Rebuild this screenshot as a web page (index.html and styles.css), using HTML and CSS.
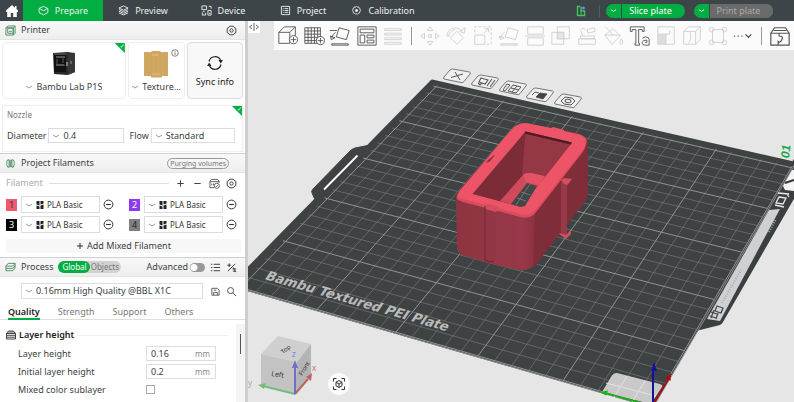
FILE: index.html
```html
<!DOCTYPE html>
<html lang="en">
<head>
<meta charset="utf-8">
<title>Bambu Studio</title>
<link rel="stylesheet" href="styles.css">
</head>
<body>
<svg class="defs" aria-hidden="true">
  <symbol id="chev" viewBox="0 0 8 8"><path d="M1 3l3 2 3-2" fill="none" stroke="currentColor"/></symbol>
  <symbol id="gear" viewBox="0 0 12 12"><path d="M4 1.3h4l.8 1.4 1.9.9v4.8l-1.9.9L8 10.700H4l-.8-1.400-1.900-.9V3.600l1.900-.9z" fill="none" stroke="currentColor" stroke-linejoin="round"/><circle cx="6" cy="6" r="1.800" fill="none" stroke="currentColor"/></symbol>
  <symbol id="minus" viewBox="0 0 10 10"><circle cx="5" cy="5" r="4" fill="none" stroke="currentColor" stroke-width=".9"/><path d="M2.800 5h4.400" stroke="currentColor"/></symbol>
  <symbol id="spool" viewBox="0 0 8 8"><path d="M.5 0h3v4.500l-3-1zM4.500 0h3v2.500l-3 1zM.5 4.500l3 1V8h-3zM4.500 4.500l3-1V8h-3z" fill="#222"/></symbol>
</svg>

<header class="topbar">
  <button class="home" aria-label="Home"><svg viewBox="0 0 14 14"><path d="M7 1L1 6.500V8h1.200v5h3.600V9h2.400v4h3.600V8H13V6.500L11.500 5V2H10v1.700z" fill="#fff"/></svg></button>
  <nav class="tabs">
    <a class="tab on" href="#prepare"><svg viewBox="0 0 12 12"><path d="M6 1.500l4.800 2.300v4.500L6 10.700 1.200 8.300V3.800zM1.200 3.800L6 6.200l4.800-2.400"/></svg>Prepare</a>
    <a class="tab" href="#preview"><svg viewBox="0 0 12 12"><path d="M6 1l5 2.300-5 2.300-5-2.300zM1 5l5 2.300L11 5M1 6.800l5 2.300 5-2.300M1 8.600l5 2.300 5-2.300"/></svg>Preview</a>
    <a class="tab" href="#device"><svg viewBox="0 0 12 12"><path d="M1 1h5v4H1zM2 7h2M8.500 1.500H11V4M7.500 6H11v5H7.500zM1.500 8v3H5V8.500M8.500 9h1.500"/></svg>Device</a>
    <a class="tab" href="#project"><svg viewBox="0 0 12 12"><path d="M1.500 1.500h9v9h-9zM5 4h4M5 6h4M5 8h4M3 4h1M3 6h1M3 8h1"/></svg>Project</a>
    <a class="tab" href="#calibration"><svg viewBox="0 0 12 12"><path d="M6 1.500l1 .7 1.300-.1.500 1.200 1.200.7-.2 1.300.6 1-.9 1-.1 1.300-1.300.4L7.200 10 6 9.700l-1.200.3-.9-1-1.300-.4-.1-1.300-.9-1 .6-1L2 4l1.200-.7.5-1.200L5 2.200z"/><circle cx="6" cy="6" r="1.200" fill="#fff"/></svg>Calibration</a>
  </nav>
  <div class="actions">
    <svg class="status" viewBox="0 0 10 12"><path d="M4 1.500H1.500v9h7V6H5V1.500" fill="none" stroke="#3fc463" stroke-width="1.400"/><path d="M5 6v4" stroke="#3fc463"/><circle cx="7.500" cy="3" r="1.500" fill="#8a7cf0"/></svg>
    <i class="vline"></i>
    <div class="pill"><button aria-label="Slice options"><svg viewBox="0 0 8 8"><use href="#chev"/></svg></button><button class="main">Slice plate</button></div>
    <div class="pill off"><button aria-label="Print options"><svg viewBox="0 0 8 8"><use href="#chev"/></svg></button><button class="main">Print plate</button></div>
  </div>
</header>

<main class="work">
<aside class="side">
  <div class="bar first">
    <svg class="ic green" viewBox="0 0 12 12"><path d="M3.500 1h7.500v8l-2 2H1V3zM3 3.500h6V9H3zM4.500 7h3M1 3h8l2-2M9 3v8"/></svg>
    <h2>Printer</h2>
    <button class="icon end" aria-label="Printer settings"><svg viewBox="0 0 12 12"><use href="#gear"/></svg></button>
  </div>

  <section class="cards">
    <div class="card wide ticked">
      <svg class="pic" viewBox="0 0 28 26"><path d="M3 2l14-1 8 1v19l-8 3-13-1z" fill="#2a2a2b"/><path d="M4 4h12v17H4z" fill="#111"/><path d="M6 5h9v2H6zM6 13h8l1 2H6z" fill="#555"/><path d="M4 3h13M7 8v5M13 7v5" stroke="#777" stroke-width=".7"/><path d="M18 3l7-1v19l-7 3z" fill="#363637"/><path d="M20 10h2v3h-2z" fill="#666"/><path d="M17 11v4" stroke="#ccc"/></svg>
      <label class="pick"><svg viewBox="0 0 8 8"><use href="#chev"/></svg><select aria-label="Printer model"><option>Bambu Lab P1S</option></select></label>
    </div>
    <div class="card mid">
      <svg class="pic" viewBox="0 0 28 28"><path d="M2 2h7l1-1h8l1 1h7v24h-6v1.500H9V26H2z" fill="#cfa761"/><path d="M5 4v20M9 4v20M14 3v21M18 4v20M23 4v20" stroke="#c8a05b" stroke-width=".5"/><path d="M10 5h7M10 24h8" stroke="#e0c083"/></svg>
      <svg class="info" viewBox="0 0 8 8"><circle cx="4" cy="4" r="3.300" fill="none" stroke="#555" stroke-width=".7"/><path d="M4 3.500V6M4 2v.8" stroke="#555" stroke-width=".8"/></svg>
      <label class="pick"><svg viewBox="0 0 8 8"><use href="#chev"/></svg><select aria-label="Plate type"><option>Texture...</option></select></label>
    </div>
    <button class="card sync"><svg viewBox="0 0 18 18"><path d="M3 7.500A6.200 6.200 0 0 1 14.500 6M15 10.500A6.200 6.200 0 0 1 3.500 12" fill="none" stroke="#222" stroke-width="1.200"/><path d="M17 6l-2.200 3.500L12.500 6zM1 12l2.200-3.500L5.500 12z" fill="#222"/></svg>Sync info</button>
  </section>

  <section class="nozzle ticked">
    <p>Nozzle</p>
    <div class="line">
      <label for="dia">Diameter</label>
      <span class="box"><svg viewBox="0 0 8 8"><use href="#chev"/></svg><select id="dia"><option>0.4</option></select></span>
      <label class="flow" for="flow">Flow</label>
      <span class="box"><svg viewBox="0 0 8 8"><use href="#chev"/></svg><select id="flow"><option>Standard</option></select></span>
    </div>
  </section>

  <div class="bar">
    <svg class="ic green" viewBox="0 0 12 12"><path d="M3 2C1.500 3 1.500 9 3 10h1.500V2zM9 2c1.500 1 1.500 7 0 8H7.500V2zM5.500 2v8M6.500 2v8"/></svg>
    <h2>Project Filaments</h2>
    <button class="purge">Purging volumes</button>
  </div>

  <section class="filaments">
    <div class="fhead">
      <span>Filament</span><i></i>
      <button class="icon" aria-label="Add filament"><svg viewBox="0 0 12 12"><path d="M6 2.500v7M2.500 6h7" stroke="#333"/></svg></button>
      <button class="icon" aria-label="Remove filament"><svg viewBox="0 0 12 12"><path d="M2.500 6h7" stroke="#333"/></svg></button>
      <button class="icon" aria-label="Sync filaments"><svg viewBox="0 0 12 12"><path d="M6 10.500H1V4h10v1.500M1 4l1.500-2.500h7L11 4M3 6v2M5 6v2" fill="none" stroke="#555"/><circle cx="8.500" cy="8.500" r="2.800" fill="#fff" stroke="#555"/><path d="M7.300 8.500l1 1 1.500-1.700" fill="none" stroke="#555" stroke-width=".8"/></svg></button>
      <button class="icon" aria-label="Filament settings"><svg viewBox="0 0 12 12"><use href="#gear"/></svg></button>
    </div>
    <div class="slots">
      <div class="slot"><b class="sw red">1</b><span class="box"><svg viewBox="0 0 8 8"><use href="#chev"/></svg><svg viewBox="0 0 8 8"><use href="#spool"/></svg><select aria-label="Filament 1"><option>PLA Basic</option></select></span><button class="icon" aria-label="Remove 1"><svg viewBox="0 0 10 10"><use href="#minus"/></svg></button></div>
      <div class="slot"><b class="sw violet">2</b><span class="box"><svg viewBox="0 0 8 8"><use href="#chev"/></svg><svg viewBox="0 0 8 8"><use href="#spool"/></svg><select aria-label="Filament 2"><option>PLA Basic</option></select></span><button class="icon" aria-label="Remove 2"><svg viewBox="0 0 10 10"><use href="#minus"/></svg></button></div>
      <div class="slot"><b class="sw black">3</b><span class="box"><svg viewBox="0 0 8 8"><use href="#chev"/></svg><svg viewBox="0 0 8 8"><use href="#spool"/></svg><select aria-label="Filament 3"><option>PLA Basic</option></select></span><button class="icon" aria-label="Remove 3"><svg viewBox="0 0 10 10"><use href="#minus"/></svg></button></div>
      <div class="slot"><b class="sw grey">4</b><span class="box"><svg viewBox="0 0 8 8"><use href="#chev"/></svg><svg viewBox="0 0 8 8"><use href="#spool"/></svg><select aria-label="Filament 4"><option>PLA Basic</option></select></span><button class="icon" aria-label="Remove 4"><svg viewBox="0 0 10 10"><use href="#minus"/></svg></button></div>
    </div>
    <button class="mixed"><svg viewBox="0 0 8 8"><path d="M4 1v6M1 4h6" stroke="#333"/></svg>Add Mixed Filament</button>
  </section>

  <div class="bar">
    <svg class="ic green" viewBox="0 0 12 12"><path d="M3.500 1.500H11l-2.500 3H1zM1 7h7.500L11 4M1 9.500h7.500L11 6.500M1 4.500v5M11 1.500v5"/></svg>
    <h2>Process</h2>
    <div class="seg"><button class="on">Global</button><button>Objects</button></div>
    <label class="adv" for="adv">Advanced</label>
    <input class="switch" type="checkbox" id="adv">
    <button class="icon" aria-label="Parameter list"><svg viewBox="0 0 12 12"><path d="M4 2.500h7M4 6h7M4 9.500h7M1 2.500h1.500M1 6h1.500M1 9.500h1.500" stroke="#333"/></svg></button>
    <button class="icon" aria-label="Compare presets"><svg viewBox="0 0 12 12"><path d="M2 10L10 2M1.500 3.500h4M3.500 1.500v4M7 7.500h4M7.500 10H11M8 6l2.500 5" fill="none" stroke="#333"/></svg></button>
  </div>

  <section class="preset">
    <span class="box"><svg viewBox="0 0 8 8"><use href="#chev"/></svg><select aria-label="Process preset"><option>0.16mm High Quality @BBL X1C</option></select></span>
    <button class="icon" aria-label="Save preset"><svg viewBox="0 0 12 12"><path d="M2 2.500h6l2 2V10H2zM4 10V7h4v3M4 4.500h3" fill="none" stroke="#444" stroke-width=".9"/></svg></button>
    <button class="icon" aria-label="Search"><svg viewBox="0 0 12 12"><circle cx="5" cy="5" r="3.300" fill="none" stroke="#444"/><path d="M7.500 7.500L11 11" stroke="#444"/></svg></button>
  </section>

  <nav class="subtabs"><a class="on" href="#quality">Quality</a><a href="#strength">Strength</a><a href="#support">Support</a><a href="#others">Others</a></nav>

  <section class="params">
    <div class="plist">
      <h3><svg viewBox="0 0 10 10"><path d="M.5 3.500L2.500 1h5l2 2.500z" fill="#aaa" stroke="#444"/><path d="M.5 3.500h9v5.500h-9zM.5 5.300h9M.5 7.200h9" fill="none" stroke="#444"/></svg>Layer height<i></i></h3>
      <div class="param"><label for="lh">Layer height</label><span class="num"><input id="lh" value="0.16"><em>mm</em></span></div>
      <div class="param"><label for="ilh">Initial layer height</label><span class="num"><input id="ilh" value="0.2"><em>mm</em></span></div>
      <div class="param"><label for="mix">Mixed color sublayer</label><input class="tick" type="checkbox" id="mix"></div>
    </div>
    <div class="track"><i></i></div>
  </section>
</aside>

<section class="view">
  <svg class="scene" viewBox="248 21 546 381" preserveAspectRatio="xMinYMin slice" role="img" aria-label="Build plate">
    <defs>
      <g id="tag"><path d="M-13 3q-1-1 0-2l6-7q1-1 3-1L12.500-4q1.500.5.500 2L7 5.500Q6 7 4 6.500z" fill="#efefef" stroke="#777" stroke-width="1"/></g>
      <linearGradient id="front" x1="0" x2="1"><stop offset="0" stop-color="#8d3440"/><stop offset=".5" stop-color="#98384a"/><stop offset=".62" stop-color="#8a313e"/><stop offset="1" stop-color="#84303b"/></linearGradient>
    </defs>
    <path d="M385 129l-15 16-15 3q-3 1-5 3l-37 38q-2 2-1 4l4 9z" fill="#3f4243" stroke="#3f4243"/>
    <path d="M696 331l24-6q2-1 3-3l72-125v-40z" fill="#3c3f40"/>
    <g id="plate"></g>
    <path d="M357.500 155.500L324 189.500" stroke="#fff" stroke-width="1.800"/>
    <path d="M707 319L769 210l11-1-60 112z" fill="#cdd1d3"/>
    <path d="M783 186l9-16h2v21l-9-1z" fill="#f4f4f4"/><path d="M785 183l9-3" stroke="#333" stroke-width="2"/>
    <g fill="none" stroke="#e8e8e8" stroke-width="1.300"><path d="M779 197l7 1-3 6-7-1zM778 193l11 1M775 205l9 2M787 194l2 3"/></g>
    <g fill="none" stroke="#444" stroke-width="1.200"><path d="M717 306l6 2-2 5-6-2zM711 312l6 2M710 316l6 2M714 310l-3 8M718 313l-2 6"/></g>
    <path d="M722 303L741 270M769 232l7-13" stroke="#aaaeb0" stroke-width="2" stroke-dasharray="1 1.500"/>
    <text class="platename" transform="translate(264 279) rotate(16) skewX(-18)">Bambu Textured PEI Plate</text>
    <text class="plateno" transform="translate(789 159) rotate(-84) skewX(-10)">01</text>

    <path d="M602 392l9-15q2-4 6-4l43 11q3 1 2 3l-11 17z" fill="#c9c9c9"/>
    <path d="M606 383l50 13M627 376l-14 23M645 381l-13 21" stroke="#e3e3e3" fill="none"/>
    <path d="M652 406L606 393" stroke="#13b413" stroke-width="1.800"/><path d="M600 392l8-1.500-2 5z" fill="#13b413"/>
    <path d="M652 406l17-28" stroke="#a80d0d" stroke-width="2"/><path d="M671 373l-.5 8-4.500-3z" fill="#a80d0d"/>
    <path d="M653 406v-36" stroke="#1212a0" stroke-width="2"/><path d="M654 362l3 9h-6z" fill="#1212a0"/>

    <g fill="none" stroke="#555">
      <g transform="translate(457 76)"><use href="#tag"/><path d="M-6 1.500L6-2M-2-4L3 4"/></g>
      <g transform="translate(485 82)"><use href="#tag"/><path d="M-4-4l7 2-3 4-6-2zM-7 1l2 2 2-2M7-3L2 4M10-2L5 5" stroke-width="1.100"/></g>
      <g transform="translate(513 88)"><use href="#tag"/><path d="M-6-4l3 1-5 6-2-1zM0-3l8 2-5 6-8-2zM4-2l-5 6M-2 0l8 2"/></g>
      <g transform="translate(540 95)"><use href="#tag"/><path d="M0-2l7 1-4 5-7-2z" fill="#444"/><path d="M-1-2l-4-1-3 3"/></g>
      <g transform="translate(568 101)"><use href="#tag"/><path d="M-7 0l4-4 7 1 3 3-4 4-7-1z"/><ellipse rx="3" ry="1.700" transform="rotate(8)"/></g>
    </g>

    <path d="M456 197Q457 192 462 187L511 130q6-7 15-7l52 10q10 3 10 12v46q0 7-5 13l-40 51q-9 15-20 15-12 0-61-15-5-2-5-8z" fill="url(#front)"/>
    <path d="M535 212L585 148q3-4 2-9 1 3 1 6v47q0 6-5 12l-40 51q-4 8-10 13z" fill="#7f2d38"/>
    <path d="M457 197q1-5 6-10L511 130q6-7 15-7l25 5 2-1 11 3v1l14 3q11 3 8 10-1 4-4 8L537 210q-6 9-17 6l-57-15q-7-2-6-4z" fill="#ee5468"/>
    <path d="M457 197l6 2 57 15q11 3 17-6L586 146q-1 3-4 7L537 211q-6 9-17 6l-57-15q-7-2-6-5z" fill="#d94c5f"/>
    <path d="M525.500 131.500L572 142.500 521 207 472.500 194z" fill="#7b2c37"/>
    <path d="M525.500 131.500L572 142.500 544 178 522 175z" fill="#953744"/>
    <path d="M525.500 131.500L572 142.500l-1.500 2-46-11z" fill="#4b1d24"/>
    <path d="M522 176q4-3 8-2l15 3L521 207l-21-6z" fill="#cf4a5b"/><path d="M523 175q4-3 8-2l14 3-6 9-13-3z" fill="#e45265"/>
    <path d="M527 183l10 3-12 20-4 1-10-3z" fill="#434646"/><path d="M521 192l9 3M517 198l9 3M530 184l-14 21" stroke="#888" stroke-width=".7"/>
    <path d="M488 160l7-5-5 6-3 2z" fill="#7b2c37"/><path d="M486 162l8-7" stroke="#b74152"/>
    <path d="M485 203l14 4-3 5-11-3z" fill="#d64d60"/><path d="M485 206v54l5 2 4-1" fill="none" stroke="#6d2731"/>
    <path d="M561 180l10-2-1 5-3 3v50l-6-2z" fill="#98394a"/><path d="M561 180l3-2 8 1-5 6-3-1z" fill="#d64d60"/><path d="M560 233l6 2 5-5v4l-5 5-7-5z" fill="#d64d60"/>

    <g>
      <path d="M278 336l33 8-14 18-36-8z" fill="#cfcfcf"/><path d="M261 354l36 8-2 32-34-9z" fill="#c3c3c3"/><path d="M311 344l-14 18-2 32 16-20z" fill="#b4b4b4"/>
      <g class="cubetext"><text transform="translate(271 376) rotate(8)">Left</text><text class="small" transform="translate(283 354) rotate(-38)">Top</text><text class="small" transform="translate(302 376) rotate(-58)">Front</text></g>
      <path d="M295 394L263 386" stroke="#74bd7b" stroke-width="2"/><path d="M258 385l8-2-2 6z" fill="#74bd7b"/>
      <path d="M295 394l13-15" stroke="#b9655f" stroke-width="2"/><path d="M312 373l-1 8-5-4z" fill="#b9655f"/>
      <path d="M295 394v-26" stroke="#7070c8" stroke-width="2"/><path d="M295 360l3 8h-6z" fill="#7070c8"/>
      <g class="axes"><text x="248" y="386" fill="#7cc284">y</text><text x="312" y="371" fill="#cf6f6f">x</text><text x="292" y="357" fill="#7c7cd4">z</text></g>
    </g>
  </svg>

  <button class="fold" aria-label="Collapse sidebar"><svg viewBox="0 0 12 10"><path d="M6 1v8M4 3L1.500 5 4 7M8 3l2.500 2L8 7" fill="none" stroke="#555" stroke-width=".9"/></svg></button>
  <button class="focus" aria-label="Fit view"><svg viewBox="0 0 14 14"><path d="M1.500 4.500v-3h3M9.500 1.500h3v3M12.500 9.500v3h-3M4.500 12.500h-3v-3M7 3.500l3 1.700v3.600l-3 1.700-3-1.700V5.200zM4 5.200L7 7l3-1.800M7 7v3.500" fill="none" stroke="#333"/></svg></button>

  <div class="tools">
    <button aria-label="Add model"><svg viewBox="0 0 24 24"><path d="M2 8h12v12H2zM2 8l6-6h12v10M14 8l6-6"/><circle cx="18" cy="16" r="4.500" fill="#fff"/><path d="M18 13v6M15 16h6"/></svg></button>
    <button aria-label="Add plate"><svg viewBox="0 0 24 24"><path d="M2 3h17v17H2zM5.500 3v17M9 3v17M12.500 3v17M16 3v17M2 6.500h17M2 10h17M2 13.500h17M2 17h17"/><circle cx="19" cy="17" r="4.500" fill="#fff"/><path d="M19 14v6M16 17h6"/></svg></button>
    <button aria-label="Auto orient"><svg viewBox="0 0 24 24"><path d="M11 3l11 3-3 10-11-3zM3 20.500h18v1.500H3zM1 6h8M7 8q-3 2-4 6M1.500 12l1 4 4-2z"/></svg></button>
    <button aria-label="Arrange"><svg viewBox="0 0 24 24"><path d="M2 2h20v20H2zM4.500 4.500h15v4h-15zM4.500 11h5v8.500h-5zM12 11h7.500v3H12zM12 16.500h7.500v3H12z"/></svg></button>
    <button class="dim" aria-label="Layers"><svg viewBox="0 0 24 24"><path d="M3 4h18v2H3zM3 9h18v2H3zM3 14h18v2H3zM3 19h18v2H3z"/></svg></button>
    <i></i>
    <button class="dim" aria-label="Move"><svg viewBox="0 0 24 24"><path d="M12 2l3 4h-6zM12 22l3-4h-6zM2 12l4-3v6zM22 12l-4-3v6zM10.500 10.500h3v3h-3z"/></svg></button>
    <button class="dim" aria-label="Rotate"><svg viewBox="0 0 24 24"><path d="M13 7l7 7-7 7-7-7zM2 13q0-9 9-10 5 0 8 4M22 3l-1 6-5-2zM4 13q0-7 7-8"/></svg></button>
    <button class="dim" aria-label="Scale"><svg viewBox="0 0 24 24"><path d="M3 11h11v10H3zM13 9l5-5v4M14 4h4"/><path d="M3 8V2h18v19h-5" stroke-dasharray="3 2"/></svg></button>
    <button class="dim" aria-label="Lay on face"><svg viewBox="0 0 24 24"><path d="M11 3l11 3-3 10-11-3zM3 20.500h18v1.500H3zM7 8q-3 2-4 6M1.500 12l1 4 4-2z"/></svg></button>
    <button class="dim" aria-label="Cut"><svg viewBox="0 0 24 24"><path d="M4 2h17v8H4zM4 14h17v8H4zM1 12h22"/></svg></button>
    <button class="dim" aria-label="Boolean"><svg viewBox="0 0 24 24"><path d="M2 8h13v13H2zM8 2h13v13H8z"/><path d="M8 8h7v7H8z" fill="#e6e6e6"/></svg></button>
    <button class="dim" aria-label="Supports"><svg viewBox="0 0 24 24"><path d="M5 12h15v3H5zM3 15h18v6H3zM8 12l-3-6 3-3 3 3M12 5l8-2 1 4-8 2z"/></svg></button>
    <button class="dim" aria-label="Color paint"><svg viewBox="0 0 24 24"><path d="M3 11l9-7 8 8-9 9zM3 11h17M4 2l8 9M21 15q3 5 0 6-3-1 0-6z"/></svg></button>
    <button aria-label="Text"><svg viewBox="0 0 24 24"><path d="M1.500 2h15v5h-2V5H10.500v15h1V22h-5v-2h1V5H3.500v2h-2zM15 15q0-2 3-2 4 0 4 3v6h-4q-4 0-3.500-3t5-2.500V19h-2"/></svg></button>
    <button class="dim" aria-label="Assembly parts"><svg viewBox="0 0 24 24"><path d="M3 2h18v19h-9"/><path d="M3 10h9v11H3z" fill="#ddd"/><path d="M3 2v8M12 10h4V6"/></svg></button>
    <button class="dim" aria-label="Seam"><svg viewBox="0 0 24 24"><path d="M3 7h13v14H3zM3 7l5-5h13v14l-5 5M16 7l5-5M10 8q2 8-2 12"/></svg></button>
    <button class="dim" aria-label="Brim ears"><svg viewBox="0 0 24 24"><path d="M6 5h12v14H6z"/><circle cx="5" cy="5" r="2.500"/><circle cx="19" cy="5" r="2.500"/><circle cx="5" cy="19" r="2.500"/><circle cx="19" cy="19" r="2.500"/></svg></button>
    <button class="more" aria-label="More tools"><svg viewBox="0 0 24 24"><path d="M1 12h1.500M5.500 12H7M10 12h1.500M15 10l3.500 3.500L22 10" stroke-width="1.500"/></svg></button>
    <i></i>
    <button aria-label="Assembly view"><svg viewBox="0 0 24 24"><path d="M2 9h20v13H2zM2 9l4-6h12l4 6M5 6h14M11 9v3q5 0 3 4t-4 2v4" stroke-width="1.300"/></svg></button>
  </div>
</section>
</main>
<script src="plate.js"></script>
</body>
</html>
```

FILE: plate.js
```js
// Draws the build plate: a 256 mm square seen in perspective, ruled every 10 mm.
(function () {
  var size = 256;
  var o = [652, 406], px = [794, 163], pxy = [432, 81], py = [232, 285];
  var dx1 = px[0] - pxy[0], dx2 = py[0] - pxy[0], sx = o[0] - px[0] + pxy[0] - py[0];
  var dy1 = px[1] - pxy[1], dy2 = py[1] - pxy[1], sy = o[1] - px[1] + pxy[1] - py[1];
  var det = dx1 * dy2 - dx2 * dy1;
  var g = (sx * dy2 - dx2 * sy) / det, h = (dx1 * sy - sx * dy1) / det;

  function at(x, y) {
    var u = x / size, v = y / size, w = g * u + h * v + 1;
    var X = ((px[0] - o[0] + g * px[0]) * u + (py[0] - o[0] + h * py[0]) * v + o[0]) / w;
    var Y = ((px[1] - o[1] + g * px[1]) * u + (py[1] - o[1] + h * py[1]) * v + o[1]) / w;
    return X.toFixed(1) + ' ' + Y.toFixed(1);
  }
  function add(d, cls) {
    var p = document.createElementNS('http://www.w3.org/2000/svg', 'path');
    p.setAttribute('d', d);
    p.setAttribute('class', cls);
    document.getElementById('plate').appendChild(p);
  }

  add('M' + at(0, 0) + 'L' + at(size, 0) + 'L' + at(size, size) + 'L' + at(0, size) + 'Z', 'sheet');
  add('M' + at(-1, 0) + 'L' + at(-1, size), 'rim');
  add('M' + at(0, -1) + 'L' + at(size, -1), 'rim');
  var thin = '', bold = '';
  for (var i = 0; i <= 250; i += 10) {
    var d = 'M' + at(i, 0) + 'L' + at(i, size - 4) + 'M' + at(0, i) + 'L' + at(size - 4, i);
    if (i % 50) thin += d; else bold += d;
  }
  add(thin, 'thin');
  add(bold, 'bold');
})();
```

FILE: styles.css
```css
* { box-sizing: border-box; margin: 0; padding: 0; }
html, body { height: 100%; }
body { display: flex; flex-direction: column; overflow: hidden; font: 9px/12px "Noto Sans", "Open Sans", sans-serif; color: #3a3f42; background: #e6e6e6; }
button, select, input { font: inherit; color: inherit; border: 0; background: none; outline: 0; }
select { appearance: none; min-width: 0; flex: 1; }
a { color: inherit; text-decoration: none; }
svg { display: block; flex: none; }
.defs { position: absolute; width: 0; height: 0; }

.topbar { display: flex; flex: none; height: 21px; background: #3d4549; color: #eee; }
.home { width: 23px; display: flex; align-items: center; justify-content: center; }
.home svg { width: 14px; height: 14px; }
.tabs { display: flex; }
.tab { display: flex; align-items: center; justify-content: center; gap: 6px; width: 80px; }
.tab svg { width: 11px; height: 11px; fill: none; stroke: currentColor; stroke-width: 1; }
.tab.on { background: #00ae42; }
.actions { display: flex; align-items: center; margin-left: auto; margin-right: 21px; }
.status { width: 10px; height: 12px; }
.vline { width: 1px; height: 12px; background: #555d61; margin: 0 6px 0 13px; }
.pill { display: flex; height: 14px; width: 79px; border-radius: 7px; overflow: hidden; background: #00ae42; color: #fff; }
.pill + .pill { margin-left: 9px; }
.pill button { width: 15px; display: flex; align-items: center; justify-content: center; }
.pill svg { width: 7px; height: 7px; }
.pill .main { flex: 1; border-left: 1px solid #3d4549; padding-right: 6px; }
.pill.off .main { background: #6b6b6b; color: #a9a9a9; }

.work { display: flex; flex: 1; min-height: 0; }
.side { width: 248px; flex: none; display: flex; flex-direction: column; background: #fff; border-right: 3px solid #cecece; overflow: hidden; }
.bar { display: flex; align-items: center; flex: none; height: 20px; padding: 0 8px 0 5px; background: linear-gradient(#f8f8f8, #eee); border-top: 1px solid #cfcfcf; border-bottom: 1px solid #e4e4e4; }
.bar.first { height: 19px; border-top: 0; }
.bar h2 { font-size: 9px; font-weight: 400; margin-left: 5px; }
.ic { width: 11px; height: 11px; fill: none; stroke: #4f8a63; stroke-width: 1; }
.end { margin-left: auto; }
.icon { display: flex; flex: none; }
.icon svg { width: 11px; height: 11px; }

.cards { display: flex; gap: 2px; padding: 2px 2px 6px; }
.card { position: relative; display: flex; flex-direction: column; align-items: center; height: 57px; border: 1px solid #eee; border-radius: 4px; background: #fff; }
.wide { flex: 126; }
.mid { flex: 57; }
.sync { flex: 56; justify-content: center; gap: 4px; background: #f8f8f8; border-color: #ddd; color: #222; }
.sync svg { width: 18px; height: 18px; }
.pic { width: 28px; height: 28px; margin-top: 7px; }
.pick { display: flex; align-items: center; gap: 3px; margin-top: 3px; color: #3a3f42; }
.pick svg, .box svg { width: 8px; height: 8px; color: #999; }
.info { position: absolute; top: 6px; right: 5px; width: 8px; height: 8px; }
.ticked { position: relative; }
.ticked::after { content: "✓"; position: absolute; top: 0; right: 0; width: 10px; height: 10px; background: #00ae42; clip-path: polygon(0 0, 100% 0, 100% 100%); color: #fff; font: 6px/6px "DejaVu Sans", sans-serif; text-align: right; }

.nozzle { margin: 0 2px 1px; height: 47px; border: 1px solid #eee; padding: 3px 7px 0 4px; }
.nozzle p { font-size: 8px; color: #777; }
.line { display: flex; align-items: center; margin-top: 7px; }
.line .box { height: 15px; margin-left: 2px; }
.line .box:nth-of-type(1) { flex: 78; }
.line .box:nth-of-type(2) { flex: 87; }
.flow { margin-left: 5px; }
.box { display: flex; align-items: center; gap: 3px; min-width: 0; padding-left: 3px; border: 1px solid #dcdcdc; background: #fff; }

.purge { margin-left: auto; margin-right: 8px; height: 11px; padding: 0 3px; border: 1px solid #999; border-radius: 6px; font-size: 6px; line-height: 9px; color: #777; }
.purge { font-size: 7px; padding: 0 2px; }
.filaments { padding: 3px 4px 4px 6px; }
.fhead { display: flex; align-items: center; gap: 6px; height: 14px; padding-right: 4px; color: #aaa; }
.fhead i { flex: 1; height: 1px; background: #ddd; }
.fhead .icon { color: #333; }
.slots { display: grid; grid-template-columns: 1fr 1fr; gap: 3px 15px; margin-top: 6px; padding-right: 4px; }
.slot { display: flex; align-items: center; height: 17px; color: #333; }
.slot .box { flex: 1; height: 17px; margin: 0 3px 0 4px; font-size: 8px; }
.slot .icon svg { width: 11px; height: 11px; }
.sw { width: 11px; height: 12px; font-weight: 400; text-align: center; line-height: 12px; }
.red { background: #f05a6e; color: #333; }
.violet { background: #8e3bf0; color: #fff; }
.black { background: #000; color: #fff; }
.grey { background: #808080; color: #222; }
.mixed { display: flex; align-items: center; justify-content: center; gap: 3px; width: 100%; height: 14px; margin-top: 6px; background: #f7f7f7; }
.mixed svg { width: 8px; height: 8px; }

.seg { display: flex; margin-left: 5px; height: 12px; border-radius: 6px; background: #d2d2d2; font-size: 8px; line-height: 12px; color: #777; }
.seg button { padding: 0 2px 0 1px; }
.seg .on { padding: 0 3px 0 4px; border-radius: 6px; background: #00ae42; color: #fff; }
.adv { margin-left: auto; }
.switch { appearance: none; width: 15px; height: 9px; margin-left: 2px; border-radius: 5px; background: radial-gradient(circle at 4px 50%, #fff 3px, #999 4px); }
.bar .switch ~ .icon { margin-left: 5px; }

.preset { display: flex; align-items: center; gap: 5px; padding: 6px 8px 0 21px; color: #3a3f42; }
.preset .box { flex: 1; height: 16px; margin-right: 2px; }
.subtabs { display: flex; gap: 18px; height: 21px; padding: 0 8px; border-bottom: 1px solid #ddd; color: #777; line-height: 26px; }
.subtabs a { height: 21px; }
.subtabs .on { color: #222; font-weight: 600; border-bottom: 2px solid #00ae42; }

.params { display: flex; flex: 1; }
.plist { flex: 1; padding: 8px 8px 0 6px; }
.plist h3 { display: flex; align-items: center; gap: 3px; height: 14px; font-size: 9px; font-weight: 600; color: #222; }
.plist h3 svg { width: 10px; height: 10px; }
.plist h3 i { flex: 1; height: 1px; background: #eee; }
.param { display: flex; align-items: center; height: 15px; margin: 3px 12px 0; }
.plist h3 + .param { margin-top: 4px; }
.param label { width: 128px; }
.num { display: flex; align-items: center; width: 70px; height: 15px; border: 1px solid #ddd; padding: 0 5px 0 4px; }
.num input { flex: 1; min-width: 0; }
.num em { font-style: normal; font-size: 8px; color: #888; }
.tick { appearance: none; width: 9px; height: 9px; border: 1px solid #aaa; background: #fff; }
.track { width: 9px; margin-top: 4px; background: #f4f4f4; }
.track i { display: block; width: 1px; height: 20px; margin: 10px 0 0 4px; background: #555; }

.view { position: relative; flex: 1; min-width: 0; background: #e6e6e6; }
.scene { position: absolute; inset: 0; width: 100%; height: 100%; }
.sheet { fill: #3f4243; stroke: #3f4243; stroke-width: 3; stroke-linejoin: round; }
.rim { fill: none; stroke: #8b8d8e; stroke-width: 1; }
.thin { fill: none; stroke: #737676; stroke-width: .7; }
.bold { fill: none; stroke: #909393; stroke-width: 1; }
.platename { font: 700 13px "DejaVu Sans", sans-serif; fill: #b9bbbb; }
.plateno { font: 700 12px "Liberation Sans", sans-serif; fill: #12a84a; }
.cubetext { font: 7px "Noto Sans", sans-serif; fill: #333; }
.cubetext .small { font-size: 6px; }
.axes { font: 8px "Noto Sans", sans-serif; }
.fold { position: absolute; left: 0; top: 0; width: 12px; height: 12px; background: #fff; display: flex; align-items: center; }
.fold svg { width: 12px; height: 10px; }
.focus { position: absolute; left: 80px; bottom: 7px; width: 22px; height: 22px; border-radius: 50%; background: #fbfbfb; display: flex; align-items: center; justify-content: center; }
.focus svg { width: 14px; height: 14px; }
.tools { position: absolute; left: 26px; right: 0; top: 0; height: 29px; padding: 0 3px; display: flex; align-items: center; justify-content: space-between; background: #fbfbfb; }
.tools button, .tools svg { width: 22px; height: 22px; }
.tools svg { fill: none; stroke: #555; stroke-width: 1; }
.tools .dim svg { stroke: #cfcfcf; }
.tools .more, .tools .more svg { width: 20px; height: 20px; }
.tools i { width: 1px; height: 18px; margin: 0 3px; background: #999; }
```
